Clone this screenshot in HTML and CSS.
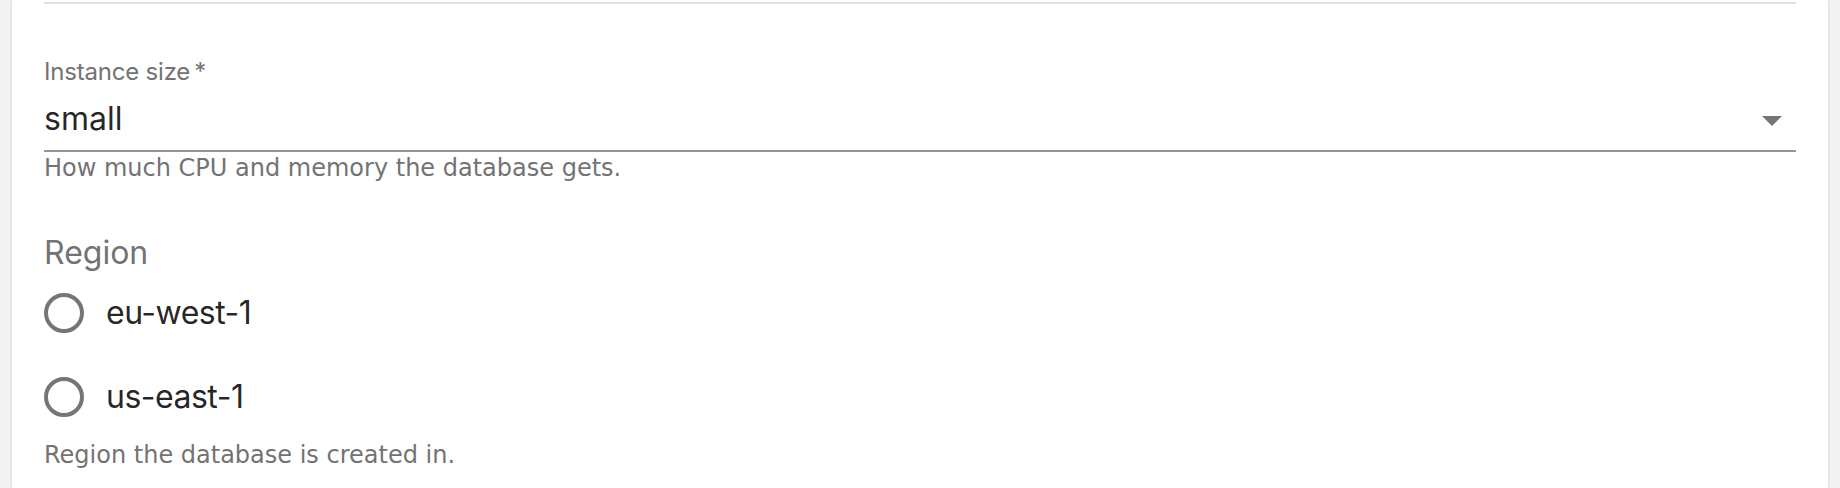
FILE: index.html
```html
<!DOCTYPE html>
<html lang="en">
<head>
    <meta charset="UTF-8">
    <meta name="viewport" content="width=device-width, initial-scale=1.0">
    <title>Create Database</title>
    <link rel="stylesheet" href="styles.css">
</head>
<body>
    <main class="card">
        <hr class="divider">

        <!-- Instance size select -->
        <div class="field">
            <label class="field-label" for="instance-size">Instance size&thinsp;*</label>
            <div class="select" id="instance-size" role="button" tabindex="0">
                <span class="select-value">small</span>
                <svg class="select-arrow" viewBox="0 0 24 24" aria-hidden="true"><path d="M7 10l5 5 5-5z"></path></svg>
            </div>
            <p class="helper">How much CPU and memory the database gets.</p>
        </div>

        <!-- Region radio group -->
        <div class="field" role="radiogroup" aria-labelledby="region-label">
            <div class="legend" id="region-label">Region</div>
            <div class="options">
                <label class="option"><input type="radio" name="region" value="eu-west-1">eu-west-1</label>
                <label class="option"><input type="radio" name="region" value="us-east-1">us-east-1</label>
            </div>
            <p class="helper">Region the database is created in.</p>
        </div>
    </main>
</body>
</html>
```

FILE: styles.css
```css
html, body {
    margin: 0;
}
body {
    background: #f3f3f3;
    font-family: Inter, sans-serif;
    height: 488px;
    overflow: hidden;
}
.card {
    margin: 0 12px;
    padding: 2px 32px 0;
    min-height: 488px;
    box-sizing: border-box;
    background: #fff;
    box-shadow: 0 0 3px rgba(0, 0, 0, 0.18);
}
.divider {
    height: 2px;
    margin: 0;
    border: none;
    background: #e0e0e0;
}
.field-label {
    display: block;
    margin-top: 56px;
    font-size: 24px;
    line-height: 24px;
    letter-spacing: -0.2px;
    color: #737373;
}
.select {
    position: relative;
    margin-top: 4px;
    height: 64px;
    box-sizing: border-box;
    border-bottom: 2px solid rgba(0, 0, 0, 0.42);
}
.select-value {
    display: block;
    padding-top: 8px;
    font-size: 32px;
    line-height: 46px;
    color: rgba(0, 0, 0, 0.87);
}
.select-arrow {
    position: absolute;
    right: 0;
    top: 8px;
    width: 48px;
    height: 48px;
    fill: rgba(0, 0, 0, 0.54);
}
.helper {
    margin: 4px 0 0;
    font-family: "DejaVu Sans", sans-serif;
    font-size: 24px;
    line-height: 24px;
    color: #737373;
}
.legend {
    margin-top: 57px;
    font-size: 32px;
    line-height: 32px;
    color: #737373;
}
.options {
    margin-top: 2px;
}
.option {
    display: flex;
    align-items: center;
    height: 84px;
    margin-left: -22px;
    font-size: 32px;
    line-height: 48px;
    letter-spacing: -0.5px;
    color: rgba(0, 0, 0, 0.87);
}
.option input {
    appearance: none;
    width: 40px;
    height: 40px;
    margin: 0 22px;
    box-sizing: border-box;
    border: 4px solid rgba(0, 0, 0, 0.54);
    border-radius: 50%;
}
```
